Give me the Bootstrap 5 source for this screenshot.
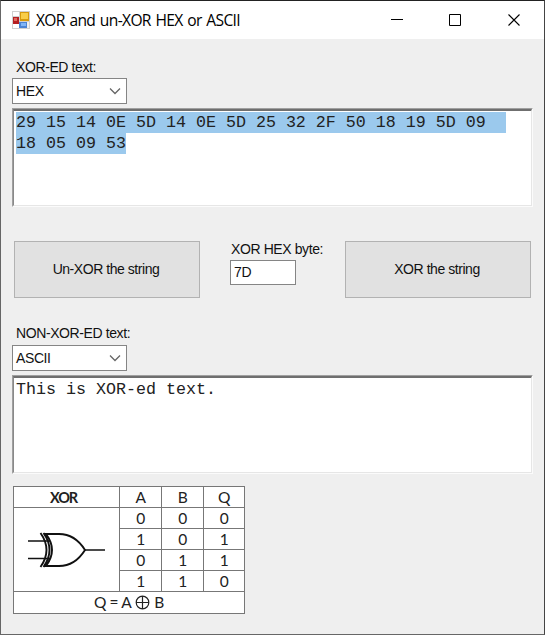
<!DOCTYPE html>
<html lang="en">
<head>
<meta charset="utf-8">
<meta name="viewport" content="width=device-width, initial-scale=1">
<title>XOR and un-XOR HEX or ASCII</title>
<link href="https://cdn.jsdelivr.net/npm/bootstrap@5.3.0/dist/css/bootstrap.min.css" rel="stylesheet">
<style>
body{width:545px;height:635px;overflow:hidden;font-family:"Liberation Sans",Arial,sans-serif;font-size:14px;color:#111;line-height:18px;letter-spacing:-.4px}
.win{width:545px;height:635px;border:1px solid #666;border-top-color:#222;border-right-color:#444;background:#efefef}
.titlebar{height:38px;padding-left:11px}
.caption{font-family:"Open Sans","Noto Sans",sans-serif;font-size:15.6px;letter-spacing:-.65px;word-spacing:1.2px;color:#000;margin-left:6px;white-space:nowrap}
.ctl{width:59px;height:38px}
.client{padding:19px 11px 0}
.lbl{height:18px;padding-left:4px;white-space:nowrap}
.combo{width:115px;height:26px;margin-top:2px;border:1px solid #858585;border-radius:0;background:#fff;padding:0 5px 1px 3px}
.edit{width:521px;height:99px;margin-top:4px;background:#fff;border:1px solid;border-color:#a0a0a0 #fbfbfb #fbfbfb #a0a0a0}
.edit-in{height:97px;border:solid;border-color:#6f6f6f #e6e6e6 #e6e6e6 #898989;border-width:2px 1px 1px 1px;padding:1px 0 0 2px;font:16.667px/21px "Liberation Mono","Courier New",monospace;letter-spacing:0;white-space:pre;color:#222}
.sel{background:#9bc9ed;display:block;width:max-content;height:21px}
.btn-win,.btn-win:hover{height:57px;width:186px;border:1px solid #b2b2b2;border-radius:0;background:#e1e1e1;color:#111;font-size:14px;letter-spacing:-.45px;padding:0 2px 0 0}
.mid{margin:34px 0 0 2px;height:57px}
.byte{width:115px;margin-left:30px}
.byte .lbl{height:19px;padding-left:1px;line-height:16px}
.field{width:66px;height:25px;border:1px solid #858585;background:#fff;padding-left:3px;line-height:22px}
.second{margin-top:26px}
.second + .combo{margin-top:3px}
.truth{display:grid;grid-template-columns:106px 42px 42px 41px;grid-template-rows:repeat(6,21.1px);width:232px;height:128px;margin:12px 0 0 1px;border:solid #777;border-width:1px 0 0 1px;background:#fff;font-family:Lato,sans-serif;font-size:15.5px;line-height:21px;text-align:center;letter-spacing:-.4px;color:#222}
.truth>div{border:solid #777;border-width:0 1px 1px 0;overflow:hidden}
.truth .fw-bold{font-size:14.5px;letter-spacing:-1.2px;padding-right:6px}
.gate{grid-row:2/6}
.eq{grid-column:1/5}
.truth svg{display:block}
</style>
</head>
<body class="m-0">
<main class="win">
<header class="titlebar d-flex align-items-center bg-white">
<svg width="18" height="18" viewBox="0 0 18 18"><path fill="#d0d0d0" d="M0 0h18v18H0z"/><path fill="#fff" d="M1 1h6v4H1zM1 13h6v4H1z"/><path fill="#eee" d="M7 11h10v6H7z"/><path fill="#b51f22" d="M1 6h6v7H1z"/><path fill="#df6b60" d="M2 7h3v3H2z"/><path fill="#d69a0e" d="M8 1h9v9H8z"/><path fill="#f8cd48" d="M9 2h7v6H9z"/><path fill="#4b83d4" d="M7 11h8v6H7z"/><path fill="#80b5f6" d="M9 12h5v3H9z"/></svg>
<span class="caption">XOR and un-XOR HEX or ASCII</span>
<div class="d-flex ms-auto">
<svg class="ctl" viewBox="0 0 59 38"><path d="M24 18.500h12" stroke="#000"/></svg>
<svg class="ctl" viewBox="0 0 59 38"><path d="M23.500 13.500h11v11h-11z" fill="none" stroke="#000"/></svg>
<svg class="ctl" viewBox="0 0 59 38"><path d="M23.500 13.500l11 11m0-11l-11 11" stroke="#000" stroke-width="1.100"/></svg>
</div>
</header>
<section class="client">
<div class="lbl">XOR-ED text:</div>
<div class="combo d-flex align-items-center justify-content-between"><span>HEX</span><svg width="12" height="8" viewBox="0 0 12 8"><path d="M1 1.500l5 5 5-5" fill="none" stroke="#666" stroke-width="1.300"/></svg></div>
<div class="edit"><div class="edit-in"><span class="sel">29 15 14 0E 5D 14 0E 5D 25 32 2F 50 18 19 5D 09  </span><span class="sel">18 05 09 53</span></div></div>
<div class="mid d-flex">
<button class="btn btn-win" type="button">Un-XOR the string</button>
<div class="byte"><div class="lbl">XOR HEX byte:</div><div class="field">7D</div></div>
<button class="btn btn-win" type="button">XOR the string</button>
</div>
<div class="lbl second">NON-XOR-ED text:</div>
<div class="combo d-flex align-items-center justify-content-between"><span>ASCII</span><svg width="12" height="8" viewBox="0 0 12 8"><path d="M1 1.500l5 5 5-5" fill="none" stroke="#666" stroke-width="1.300"/></svg></div>
<div class="edit"><div class="edit-in">This is XOR-ed text.</div></div>
<div class="truth">
<div class="fw-bold">XOR</div><div>A</div><div>B</div><div>Q</div>
<div class="gate"><svg width="105" height="83" viewBox="0 0 105 83"><g fill="none" stroke="#111"><path d="M14 33h22M14 50.500h22M71 42h20" stroke-width="1.500"/><path d="M26.500 25q12 17 0 34M32 26q12 16 0 32h13q16 0 26-16-10-16-26-16zM29.500 25q12 17 0 34" stroke-width="1.900"/></g></svg></div>
<div>0</div><div>0</div><div>0</div>
<div>1</div><div>0</div><div>1</div>
<div>0</div><div>1</div><div>1</div>
<div>1</div><div>1</div><div>0</div>
<div class="eq d-flex align-items-center justify-content-center"><span>Q = A</span><svg class="mx-1" width="15" height="15" viewBox="0 0 15 15"><g fill="none" stroke="#222" stroke-width="1.200"><circle cx="7.500" cy="7.500" r="6.300"/><path d="M1 7.500h13M7.500 1v13"/></g></svg><span>B</span></div>
</div>
</section>
</main>
<script src="https://cdn.jsdelivr.net/npm/bootstrap@5.3.0/dist/js/bootstrap.bundle.min.js"></script>
</body>
</html>
